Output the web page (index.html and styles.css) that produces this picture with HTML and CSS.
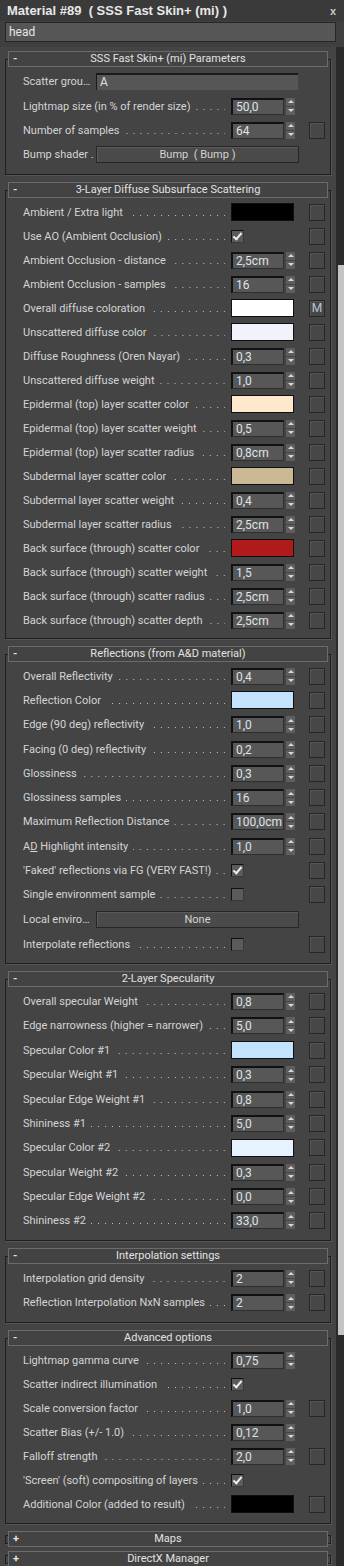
FILE: index.html
```html
<!DOCTYPE html>
<html>
<head>
<meta charset="utf-8">
<link rel="stylesheet" href="styles.css">
</head>
<body>
<div class="window">
  <div class="titlebar"><span class="title">Material #89  ( SSS Fast Skin+ (mi) )</span><span class="close">x</span></div>
  <div class="namebar"><div class="namefield">head</div></div>
  <div class="main">
    <div class="panel">

      <section class="rollout">
        <div class="rh"><span class="tog">-</span><span class="rt">SSS Fast Skin+ (mi) Parameters</span><span></span></div>
        <div class="rows">
          <div class="row wide"><span class="lbl"><span class="t">Scatter grou…</span></span><span class="field">A</span></div>
          <div class="row"><span class="lbl"><span class="t">Lightmap size (in % of render size)</span><span class="d"></span></span><span class="spin"><span class="val">50,0</span><span class="arr"><i></i><i></i></span></span></div>
          <div class="row"><span class="lbl"><span class="t">Number of samples</span><span class="d"></span></span><span class="spin"><span class="val">64</span><span class="arr"><i></i><i></i></span></span><span class="gapc"></span><span class="map"></span></div>
          <div class="row wide"><span class="lbl"><span class="t">Bump shader .</span></span><span class="btn">Bump&nbsp;&nbsp;( Bump )</span></div>
        </div>
      </section>

      <section class="rollout">
        <div class="rh"><span class="tog">-</span><span class="rt">3-Layer Diffuse Subsurface Scattering</span><span></span></div>
        <div class="rows tight">
          <div class="row"><span class="lbl"><span class="t">Ambient / Extra light</span><span class="d"></span></span><span class="sw black"></span><span class="gapc"></span><span class="map"></span></div>
          <div class="row"><span class="lbl"><span class="t">Use AO (Ambient Occlusion)</span><span class="d"></span></span><span class="ctl"><span class="chk on"></span></span><span class="gapc"></span><span class="map"></span></div>
          <div class="row"><span class="lbl"><span class="t">Ambient Occlusion - distance</span><span class="d"></span></span><span class="spin"><span class="val">2,5cm</span><span class="arr"><i></i><i></i></span></span><span class="gapc"></span><span class="map"></span></div>
          <div class="row"><span class="lbl"><span class="t">Ambient Occlusion - samples</span><span class="d"></span></span><span class="spin"><span class="val">16</span><span class="arr"><i></i><i></i></span></span><span class="gapc"></span><span class="map"></span></div>
          <div class="row"><span class="lbl"><span class="t">Overall diffuse coloration</span><span class="d"></span></span><span class="sw white"></span><span class="gapc"></span><span class="map">M</span></div>
          <div class="row"><span class="lbl"><span class="t">Unscattered diffuse color</span><span class="d"></span></span><span class="sw unsc"></span><span class="gapc"></span><span class="map"></span></div>
          <div class="row"><span class="lbl"><span class="t">Diffuse Roughness (Oren Nayar)</span><span class="d"></span></span><span class="spin"><span class="val">0,3</span><span class="arr"><i></i><i></i></span></span><span class="gapc"></span><span class="map"></span></div>
          <div class="row"><span class="lbl"><span class="t">Unscattered diffuse weight</span><span class="d"></span></span><span class="spin"><span class="val">1,0</span><span class="arr"><i></i><i></i></span></span><span class="gapc"></span><span class="map"></span></div>
          <div class="row"><span class="lbl"><span class="t">Epidermal (top) layer scatter color</span><span class="d"></span></span><span class="sw epi"></span><span class="gapc"></span><span class="map"></span></div>
          <div class="row"><span class="lbl"><span class="t">Epidermal (top) layer scatter weight</span><span class="d"></span></span><span class="spin"><span class="val">0,5</span><span class="arr"><i></i><i></i></span></span><span class="gapc"></span><span class="map"></span></div>
          <div class="row"><span class="lbl"><span class="t">Epidermal (top) layer scatter radius</span><span class="d"></span></span><span class="spin"><span class="val">0,8cm</span><span class="arr"><i></i><i></i></span></span><span class="gapc"></span><span class="map"></span></div>
          <div class="row"><span class="lbl"><span class="t">Subdermal layer scatter color</span><span class="d"></span></span><span class="sw sub"></span><span class="gapc"></span><span class="map"></span></div>
          <div class="row"><span class="lbl"><span class="t">Subdermal layer scatter weight</span><span class="d"></span></span><span class="spin"><span class="val">0,4</span><span class="arr"><i></i><i></i></span></span><span class="gapc"></span><span class="map"></span></div>
          <div class="row"><span class="lbl"><span class="t">Subdermal layer scatter radius</span><span class="d"></span></span><span class="spin"><span class="val">2,5cm</span><span class="arr"><i></i><i></i></span></span><span class="gapc"></span><span class="map"></span></div>
          <div class="row"><span class="lbl"><span class="t">Back surface (through) scatter color</span><span class="d"></span></span><span class="sw back"></span><span class="gapc"></span><span class="map"></span></div>
          <div class="row"><span class="lbl"><span class="t">Back surface (through) scatter weight</span><span class="d"></span></span><span class="spin"><span class="val">1,5</span><span class="arr"><i></i><i></i></span></span><span class="gapc"></span><span class="map"></span></div>
          <div class="row"><span class="lbl"><span class="t">Back surface (through) scatter radius</span><span class="d"></span></span><span class="spin"><span class="val">2,5cm</span><span class="arr"><i></i><i></i></span></span><span class="gapc"></span><span class="map"></span></div>
          <div class="row"><span class="lbl"><span class="t">Back surface (through) scatter depth</span><span class="d"></span></span><span class="spin"><span class="val">2,5cm</span><span class="arr"><i></i><i></i></span></span><span class="gapc"></span><span class="map"></span></div>
        </div>
      </section>

      <section class="rollout">
        <div class="rh"><span class="tog">-</span><span class="rt">Reflections (from A&amp;D material)</span><span></span></div>
        <div class="rows r3">
          <div class="row"><span class="lbl"><span class="t">Overall Reflectivity</span><span class="d"></span></span><span class="spin"><span class="val">0,4</span><span class="arr"><i></i><i></i></span></span><span class="gapc"></span><span class="map"></span></div>
          <div class="row"><span class="lbl"><span class="t">Reflection Color</span><span class="d"></span></span><span class="sw refl"></span><span class="gapc"></span><span class="map"></span></div>
          <div class="row"><span class="lbl"><span class="t">Edge (90 deg) reflectivity</span><span class="d"></span></span><span class="spin"><span class="val">1,0</span><span class="arr"><i></i><i></i></span></span><span class="gapc"></span><span class="map"></span></div>
          <div class="row"><span class="lbl"><span class="t">Facing (0 deg) reflectivity</span><span class="d"></span></span><span class="spin"><span class="val">0,2</span><span class="arr"><i></i><i></i></span></span><span class="gapc"></span><span class="map"></span></div>
          <div class="row"><span class="lbl"><span class="t">Glossiness</span><span class="d"></span></span><span class="spin"><span class="val">0,3</span><span class="arr"><i></i><i></i></span></span><span class="gapc"></span><span class="map"></span></div>
          <div class="row"><span class="lbl"><span class="t">Glossiness samples</span><span class="d"></span></span><span class="spin"><span class="val">16</span><span class="arr"><i></i><i></i></span></span><span class="gapc"></span><span class="map"></span></div>
          <div class="row"><span class="lbl"><span class="t">Maximum Reflection Distance</span><span class="d"></span></span><span class="spin"><span class="val">100,0cm</span><span class="arr"><i></i><i></i></span></span><span class="gapc"></span><span class="map"></span></div>
          <div class="row"><span class="lbl"><span class="t">A<u>D</u> Highlight intensity</span><span class="d"></span></span><span class="spin"><span class="val">1,0</span><span class="arr"><i></i><i></i></span></span><span class="gapc"></span><span class="map"></span></div>
          <div class="row"><span class="lbl"><span class="t">'Faked' reflections via FG (VERY FAST!)</span><span class="d"></span></span><span class="ctl"><span class="chk on"></span></span><span class="gapc"></span><span class="map"></span></div>
          <div class="row"><span class="lbl"><span class="t">Single environment sample</span><span class="d"></span></span><span class="ctl"><span class="chk"></span></span><span class="gapc"></span><span class="map"></span></div>
          <div class="row wide"><span class="lbl"><span class="t">Local enviro…</span></span><span class="btn">None</span></div>
          <div class="row"><span class="lbl"><span class="t">Interpolate reflections</span><span class="d"></span></span><span class="ctl"><span class="chk"></span></span><span class="gapc"></span><span class="map"></span></div>
        </div>
      </section>

      <section class="rollout">
        <div class="rh"><span class="tog">-</span><span class="rt">2-Layer Specularity</span><span></span></div>
        <div class="rows r4">
          <div class="row"><span class="lbl"><span class="t">Overall specular Weight</span><span class="d"></span></span><span class="spin"><span class="val">0,8</span><span class="arr"><i></i><i></i></span></span><span class="gapc"></span><span class="map"></span></div>
          <div class="row"><span class="lbl"><span class="t">Edge narrowness (higher = narrower)</span><span class="d"></span></span><span class="spin"><span class="val">5,0</span><span class="arr"><i></i><i></i></span></span><span class="gapc"></span><span class="map"></span></div>
          <div class="row"><span class="lbl"><span class="t">Specular Color #1</span><span class="d"></span></span><span class="sw spec1"></span><span class="gapc"></span><span class="map"></span></div>
          <div class="row"><span class="lbl"><span class="t">Specular Weight #1</span><span class="d"></span></span><span class="spin"><span class="val">0,3</span><span class="arr"><i></i><i></i></span></span><span class="gapc"></span><span class="map"></span></div>
          <div class="row"><span class="lbl"><span class="t">Specular Edge Weight #1</span><span class="d"></span></span><span class="spin"><span class="val">0,8</span><span class="arr"><i></i><i></i></span></span><span class="gapc"></span><span class="map"></span></div>
          <div class="row"><span class="lbl"><span class="t">Shininess #1</span><span class="d"></span></span><span class="spin"><span class="val">5,0</span><span class="arr"><i></i><i></i></span></span><span class="gapc"></span><span class="map"></span></div>
          <div class="row"><span class="lbl"><span class="t">Specular Color #2</span><span class="d"></span></span><span class="sw spec2"></span><span class="gapc"></span><span class="map"></span></div>
          <div class="row"><span class="lbl"><span class="t">Specular Weight #2</span><span class="d"></span></span><span class="spin"><span class="val">0,3</span><span class="arr"><i></i><i></i></span></span><span class="gapc"></span><span class="map"></span></div>
          <div class="row"><span class="lbl"><span class="t">Specular Edge Weight #2</span><span class="d"></span></span><span class="spin"><span class="val">0,0</span><span class="arr"><i></i><i></i></span></span><span class="gapc"></span><span class="map"></span></div>
          <div class="row"><span class="lbl"><span class="t">Shininess #2</span><span class="d"></span></span><span class="spin"><span class="val">33,0</span><span class="arr"><i></i><i></i></span></span><span class="gapc"></span><span class="map"></span></div>
        </div>
      </section>

      <section class="rollout">
        <div class="rh"><span class="tog">-</span><span class="rt">Interpolation settings</span><span></span></div>
        <div class="rows r5">
          <div class="row"><span class="lbl"><span class="t">Interpolation grid density</span><span class="d"></span></span><span class="spin"><span class="val">2</span><span class="arr"><i></i><i></i></span></span><span class="gapc"></span><span class="map"></span></div>
          <div class="row"><span class="lbl"><span class="t">Reflection Interpolation NxN samples</span><span class="d"></span></span><span class="spin"><span class="val">2</span><span class="arr"><i></i><i></i></span></span><span class="gapc"></span><span class="map"></span></div>
        </div>
      </section>

      <section class="rollout">
        <div class="rh"><span class="tog">-</span><span class="rt">Advanced options</span><span></span></div>
        <div class="rows">
          <div class="row"><span class="lbl"><span class="t">Lightmap gamma curve</span><span class="d"></span></span><span class="spin"><span class="val">0,75</span><span class="arr"><i></i><i></i></span></span></div>
          <div class="row"><span class="lbl"><span class="t">Scatter indirect illumination</span><span class="d"></span></span><span class="ctl"><span class="chk on"></span></span></div>
          <div class="row"><span class="lbl"><span class="t">Scale conversion factor</span><span class="d"></span></span><span class="spin"><span class="val">1,0</span><span class="arr"><i></i><i></i></span></span><span class="gapc"></span><span class="map"></span></div>
          <div class="row"><span class="lbl"><span class="t">Scatter Bias (+/- 1.0)</span><span class="d"></span></span><span class="spin"><span class="val">0,12</span><span class="arr"><i></i><i></i></span></span></div>
          <div class="row"><span class="lbl"><span class="t">Falloff strength</span><span class="d"></span></span><span class="spin"><span class="val">2,0</span><span class="arr"><i></i><i></i></span></span><span class="gapc"></span><span class="map"></span></div>
          <div class="row"><span class="lbl"><span class="t">'Screen' (soft) compositing of layers</span><span class="d"></span></span><span class="ctl"><span class="chk on"></span></span></div>
          <div class="row"><span class="lbl"><span class="t">Additional Color (added to result)</span><span class="d"></span></span><span class="sw black"></span><span class="gapc"></span><span class="map"></span></div>
        </div>
      </section>

      <section class="rollout closed">
        <div class="rh"><span class="tog">+</span><span class="rt">Maps</span><span></span></div>
      </section>

      <section class="rollout closed">
        <div class="rh"><span class="tog">+</span><span class="rt">DirectX Manager</span><span></span></div>
      </section>

    </div>
    <div class="scroll"><div class="thumb"></div></div>
  </div>
</div>
</body>
</html>
```
FILE: styles.css
```css
* { box-sizing: border-box; }
html, body { margin: 0; padding: 0; }
body {
  background: #444444;
  font-family: Roboto, "Liberation Sans", sans-serif;
  font-size: 11px;
  color: #d4d4d4;
  overflow: hidden;
}
.window {
  width: 344px;
  height: 1566px;
  display: flex;
  flex-direction: column;
  overflow: hidden;
}
.titlebar {
  flex: none;
  height: 21px;
  background: #3a3a3a;
  display: flex;
  align-items: center;
  justify-content: space-between;
  padding: 0 8px 0 7px;
  font-family: "Liberation Sans", Arial, sans-serif;
  font-weight: bold;
  font-size: 13px;
  color: #e8e8e8;
}
.title { white-space: pre; }
.close { font-size: 11px; color: #c8c8c8; }
.namebar {
  flex: none;
  background: #3f3f3f;
  padding: 1px 8px 5px 5px;
}
.namefield {
  height: 20px;
  border: 1px solid #262626;
  background: #565656;
  padding: 0 3px;
  font-size: 12px;
  line-height: 18px;
  color: #e6e6e6;
}
.main {
  flex: 1;
  display: flex;
  min-height: 0;
}
.panel {
  width: 336px;
  flex: none;
  display: flex;
  flex-direction: column;
  gap: 7px;
  padding-top: 4px;
}
.scroll {
  flex: 1;
  background: #2a2a2a;
  padding-top: 218px;
}
.thumb {
  height: 1070px;
  background: #c4c4c4;
  margin-left: 2px;
}

/* rollouts */
.rollout {
  margin: 8px 5px 0 5px;
  border: 1px solid #1f1f1f;
  box-shadow: 1px 1px 0 #555555;
}
.rollout.closed {
  margin-top: 4px;
  height: 9px;
}
.rh {
  height: 16px;
  margin: -9px 2px 0 2px;
  border: 1px solid #6b6b6b;
  background: #434343;
  display: grid;
  grid-template-columns: 16px 1fr 16px;
  align-items: center;
  color: #e2e2e2;
  font-size: 11px;
  line-height: 14px;
}
.rollout.closed .rh { margin-top: -5px; }
.tog { padding-left: 4px; font-weight: bold; }
.rt { text-align: center; }

.rows { padding: 2px 0 7px 0; --rh: 24px; }
.rows.tight { padding-bottom: 6px; }
.rows.r3 { --rh: 24.3px; }
.rows.r4 { --rh: 24.4px; }
.rows.r5 { --rh: 24.5px; }
.row {
  height: var(--rh);
  display: grid;
  grid-template-columns: 208px 64px 14px 16px;
  align-items: center;
  padding-left: 17px;
}
.row.wide { grid-template-columns: 73px 203px; height: 25px; }

.lbl {
  display: flex;
  align-items: baseline;
  white-space: nowrap;
  overflow: hidden;
}
.lbl .t { flex: none; }
.lbl .d {
  flex: 1;
  height: 1px;
  margin: 0 6px 0 5px;
  background: linear-gradient(to right, transparent 6px, #c4c4c4 6px) repeat-x right / 7px 1px;
}

/* spinner */
.spin { display: flex; align-items: center; height: 17px; }
.val {
  width: 53px;
  height: 17px;
  background: #575757;
  border-top: 2px solid #111;
  border-left: 2px solid #111;
  border-right: 1px solid #2e2e2e;
  border-bottom: 1px solid #2e2e2e;
  padding-left: 3px;
  line-height: 14px;
  font-size: 12px;
  color: #dde3ea;
}
.arr {
  width: 9px;
  height: 17px;
  margin-left: 2px;
  display: flex;
  flex-direction: column;
  gap: 1px;
}
.arr i {
  flex: 1;
  background: #5e5e5e;
  display: flex;
  align-items: center;
  justify-content: center;
}
.arr i::after {
  content: "";
  border-left: 3px solid transparent;
  border-right: 3px solid transparent;
}
.arr i:first-child::after { border-bottom: 3px solid #d8d8d8; }
.arr i:last-child::after { border-top: 3px solid #d8d8d8; }

/* map button */
.map {
  width: 16px;
  height: 17px;
  border: 1px solid #262626;
  background: #474747;
  box-shadow: inset 1px 1px 0 #555;
  color: #b8c4d6;
  font-size: 12px;
  line-height: 15px;
  text-align: center;
}

/* color swatch */
.sw {
  width: 63px;
  height: 18px;
  border: 1px solid #101010;
}
.sw.black { background: #000; }
.sw.white { background: #ffffff; }
.sw.unsc { background: #f2f2fd; }
.sw.epi { background: #fde8cb; }
.sw.sub { background: #c9b893; }
.sw.back { background: #b01a1a; }
.sw.refl { background: #c2e2fd; }
.sw.spec1 { background: #c3e3fd; }
.sw.spec2 { background: #e6f2fe; }

/* checkbox */
.ctl { display: flex; align-items: center; }
.chk {
  width: 13px;
  height: 13px;
  background: #5b5b5b;
  border-top: 1px solid #111;
  border-left: 1px solid #111;
  border-right: 1px solid #3a3a3a;
  border-bottom: 1px solid #3a3a3a;
  position: relative;
}
.chk.on::after {
  content: "";
  position: absolute;
  left: 3px;
  top: 0px;
  width: 3px;
  height: 7px;
  border-right: 2px solid #eeeeee;
  border-bottom: 2px solid #eeeeee;
  transform: rotate(40deg);
}

/* buttons / fields */
.btn {
  height: 17px;
  border: 1px solid #262626;
  background: #4a4a4a;
  box-shadow: inset 1px 1px 0 #5a5a5a;
  text-align: center;
  line-height: 15px;
  font-size: 11px;
  color: #d4d4d4;
}
.field {
  height: 17px;
  width: 202px;
  background: #565656;
  border-top: 2px solid #1a1a1a;
  border-left: 1px solid #1a1a1a;
  padding-left: 3px;
  line-height: 14px;
  font-size: 12px;
  color: #e0e0e0;
}
```
